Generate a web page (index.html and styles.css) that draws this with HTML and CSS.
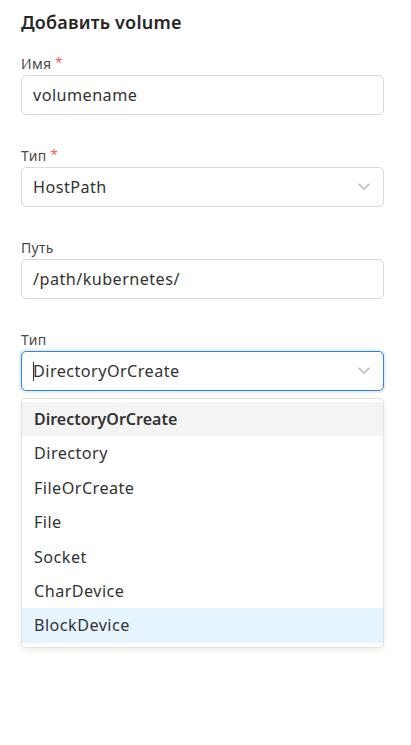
FILE: index.html
```html
<!DOCTYPE html>
<html lang="ru">
<head>
<meta charset="utf-8">
<title>Добавить volume</title>
<link rel="stylesheet" href="styles.css">
</head>
<body>
<div class="page">
  <h1 class="title">Добавить volume</h1>

  <div class="field">
    <div class="label">Имя <span class="req">*</span></div>
    <div class="control"><span class="value">volumename</span></div>
  </div>

  <div class="field">
    <div class="label">Тип <span class="req">*</span></div>
    <div class="control select"><span class="value">HostPath</span>
      <svg class="chev" viewBox="0 0 12 8" width="12" height="8"><path d="M1.2 1.4 L6 6 L10.8 1.4" fill="none" stroke="currentColor" stroke-width="1.7" stroke-linecap="round" stroke-linejoin="round"/></svg>
    </div>
  </div>

  <div class="field">
    <div class="label">Путь</div>
    <div class="control"><span class="value">/path/kubernetes/</span></div>
  </div>

  <div class="field last">
    <div class="label">Тип</div>
    <div class="control select focused"><span class="caret"></span><span class="value">DirectoryOrCreate</span>
      <svg class="chev" viewBox="0 0 12 8" width="12" height="8"><path d="M1.2 1.4 L6 6 L10.8 1.4" fill="none" stroke="currentColor" stroke-width="1.7" stroke-linecap="round" stroke-linejoin="round"/></svg>
    </div>
    <div class="dropdown">
      <div class="opt selected">DirectoryOrCreate</div>
      <div class="opt">Directory</div>
      <div class="opt">FileOrCreate</div>
      <div class="opt">File</div>
      <div class="opt">Socket</div>
      <div class="opt">CharDevice</div>
      <div class="opt active">BlockDevice</div>
    </div>
  </div>
</div>
</body>
</html>
```

FILE: styles.css
```css
* { box-sizing: border-box; }
html, body { margin: 0; padding: 0; background: #fff; }
body {
  font-family: "Noto Sans", "Open Sans", "DejaVu Sans", sans-serif;
  color: #333;
}
.page {
  padding: 10px 27px 0 21px;
}
.title {
  margin: 0 0 20px 0;
  font-size: 18px;
  line-height: 24px;
  font-weight: 600;
  color: #262626;
  letter-spacing: 0.2px;
}
.field {
  margin-bottom: 31px;
  position: relative;
}
.label {
  height: 20px;
  line-height: 20px;
  font-size: 14px;
  color: #4a4a4a;
  margin-bottom: 1px;
  letter-spacing: 0.3px;
}
.req {
  color: #ff4d4f;
  font-size: 13px;
  vertical-align: top;
  line-height: 16px;
}
.control {
  height: 40px;
  border: 1px solid #d9d9d9;
  border-radius: 5px;
  display: flex;
  align-items: center;
  padding: 0 11px;
  font-size: 16.2px;
  letter-spacing: 0.45px;
  color: #333;
  background: #fff;
}
.select { justify-content: space-between; }
.select .value { flex: 1; }
.chev { color: #bfbfbf; margin-right: 2px; }
.focused {
  border-color: #2f80ed;
  box-shadow: 0 0 0 2px rgba(47, 128, 237, 0.12);
}
.caret {
  width: 1px;
  height: 19px;
  background: #333;
  margin-right: -1px;
}
.dropdown {
  margin-top: 7px;
  border: 1px solid #e3e3e3;
  border-radius: 5px;
  padding: 3px 0 4px;
  background: #fff;
  box-shadow: 0 2px 6px rgba(0, 0, 0, 0.08);
}
.opt {
  height: 34.4px;
  line-height: 34.4px;
  padding: 0 12px;
  font-size: 16.2px;
  letter-spacing: 0.45px;
  color: #333;
}
.opt.selected { background: #f4f4f4; font-weight: 600; font-size: 16px; letter-spacing: 0; }
.opt.active { background: #e6f4ff; }
```
